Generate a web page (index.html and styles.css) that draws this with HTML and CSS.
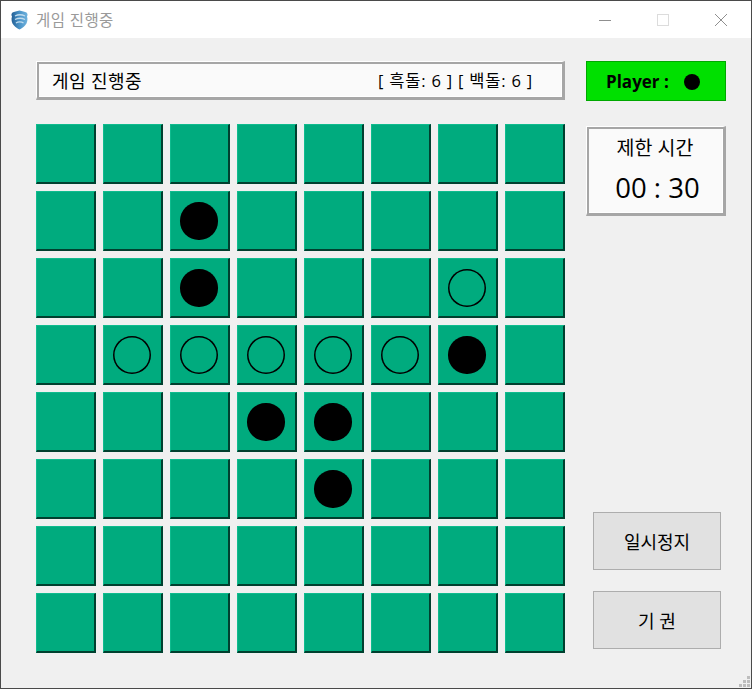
FILE: index.html
```html
<!DOCTYPE html>
<html lang="ko">
<head>
<meta charset="utf-8">
<title>게임 진행중</title>
<link rel="stylesheet" href="styles.css">
</head>
<body>
<div class="window">
  <header class="titlebar">
    <svg class="app-icon" width="17" height="20" viewBox="0 0 17 20">
      <defs>
        <linearGradient id="shield" x1="0" y1="0" x2="1" y2="0">
          <stop offset="0" stop-color="#235f95"/>
          <stop offset=".5" stop-color="#4b94c8"/>
          <stop offset="1" stop-color="#6fb2dd"/>
        </linearGradient>
      </defs>
      <path d="M8.500 0.500 C11 1.500 14 1.500 15.500 2.500 C16.800 4 16.800 5 16 6.500 C17 9 16.500 13 14 15.500 C12.500 17.200 10.500 18.700 8.500 19.500 C6.500 18.700 4.500 17.200 3 15.500 C.5 13 0 9 1 6.500 C.2 5 .2 4 1.500 2.500 C3 1.500 6 1.500 8.500 .5Z" fill="url(#shield)"/>
      <path d="M4 6 C7 4.500 11 4.500 14 6 M4 9.500 C7 8 11 8 14 9.500 M5 13 C7 11.500 10.500 11.500 12.500 13" stroke="#c2dcee" stroke-width="1.300" fill="none"/>
    </svg>
    <span class="title-text">게임 진행중</span>
    <div class="win-controls">
      <svg width="14" height="14" viewBox="0 0 14 14"><path d="M1 7.500H13" stroke="#8f8f8f"/></svg>
      <svg width="14" height="14" viewBox="0 0 14 14"><rect x="1.500" y="1.500" width="11" height="11" fill="none" stroke="#dcdcdc"/></svg>
      <svg width="14" height="14" viewBox="0 0 14 14"><path d="M1 1L13 13M13 1L1 13" stroke="#8f8f8f"/></svg>
    </div>
  </header>
  <main class="content">
    <section class="left">
      <div class="status panel">
        <span>게임 진행중</span>
        <span class="score">[ 흑돌: 6 ] [ 백돌: 6 ]</span>
      </div>
      <div class="board">
        <div class="cell"></div><div class="cell"></div><div class="cell"></div><div class="cell"></div><div class="cell"></div><div class="cell"></div><div class="cell"></div><div class="cell"></div>
        <div class="cell"></div><div class="cell"></div><div class="cell"><i class="disc black"></i></div><div class="cell"></div><div class="cell"></div><div class="cell"></div><div class="cell"></div><div class="cell"></div>
        <div class="cell"></div><div class="cell"></div><div class="cell"><i class="disc black"></i></div><div class="cell"></div><div class="cell"></div><div class="cell"></div><div class="cell"><i class="disc white"></i></div><div class="cell"></div>
        <div class="cell"></div><div class="cell"><i class="disc white"></i></div><div class="cell"><i class="disc white"></i></div><div class="cell"><i class="disc white"></i></div><div class="cell"><i class="disc white"></i></div><div class="cell"><i class="disc white"></i></div><div class="cell"><i class="disc black"></i></div><div class="cell"></div>
        <div class="cell"></div><div class="cell"></div><div class="cell"></div><div class="cell"><i class="disc black"></i></div><div class="cell"><i class="disc black"></i></div><div class="cell"></div><div class="cell"></div><div class="cell"></div>
        <div class="cell"></div><div class="cell"></div><div class="cell"></div><div class="cell"></div><div class="cell"><i class="disc black"></i></div><div class="cell"></div><div class="cell"></div><div class="cell"></div>
        <div class="cell"></div><div class="cell"></div><div class="cell"></div><div class="cell"></div><div class="cell"></div><div class="cell"></div><div class="cell"></div><div class="cell"></div>
        <div class="cell"></div><div class="cell"></div><div class="cell"></div><div class="cell"></div><div class="cell"></div><div class="cell"></div><div class="cell"></div><div class="cell"></div>
      </div>
    </section>
    <aside class="right">
      <div class="player">
        <span>Player :</span>
        <i class="player-disc"></i>
      </div>
      <div class="timer panel">
        <span class="timer-label">제한 시간</span>
        <span class="timer-value">00 : 30</span>
      </div>
      <div class="actions">
        <button class="btn">일시정지</button>
        <button class="btn">기 권</button>
      </div>
    </aside>
  </main>
  <svg class="grip" width="12" height="12" viewBox="0 0 12 12">
    <path d="M8 0h3v3H8zM4 4h3v3H4zM8 4h3v3H8zM0 8h3v3H0zM4 8h3v3H4zM8 8h3v3H8z" fill="#bdbdbd"/>
  </svg>
</div>
</body>
</html>
```
FILE: styles.css
```css
* { box-sizing: border-box; }
html, body { margin: 0; padding: 0; }
body {
  width: 752px;
  height: 689px;
  overflow: hidden;
  font-family: "Open Sans", "Noto Sans CJK KR", sans-serif;
  color: #000;
}
.window {
  position: relative;
  width: 752px;
  height: 689px;
  display: flex;
  flex-direction: column;
  background: #f0f0f0;
  border: 1px solid #4a4a4a;
}
.titlebar {
  height: 37px;
  flex: none;
  display: flex;
  align-items: center;
  background: #fff;
  padding-left: 10px;
}
.app-icon { flex: none; margin-right: 8px; margin-top: 1px; }
.title-text { font-size: 15.500px; color: #9a9a9a; letter-spacing: .4px; }
.win-controls {
  margin-left: auto;
  display: flex;
  gap: 44px;
  padding-right: 23px;
}
.content {
  flex: 1;
  display: flex;
  padding: 23px 0 0 35px;
  gap: 21px;
}
.left { width: 529px; flex: none; }
.panel {
  background: #fafafa;
  border-style: solid;
  border-color: #fff #a6a6a6 #a6a6a6 #fff;
  border-width: 1px 3px 3px 1px;
  box-shadow: inset 2px 2px 0 #a6a6a6, inset -1px -1px 0 #fff;
}
.status {
  height: 39px;
  display: flex;
  justify-content: space-between;
  align-items: center;
  padding: 0 29px 0 15px;
  font-size: 18px;
  letter-spacing: .4px;
}
.score { font-size: 16.500px; letter-spacing: .8px; }
.board {
  margin-top: 24px;
  display: grid;
  grid-template-columns: repeat(8, 60px);
  grid-auto-rows: 60px;
  gap: 7px;
}
.cell {
  display: flex;
  align-items: center;
  justify-content: center;
  background: #00ab7e;
  border-top: 1px solid #0fbb8e;
  border-left: 1px solid #0fbb8e;
  border-right: 2px solid #00402f;
  border-bottom: 2px solid #00402f;
}
.disc {
  width: 38px;
  height: 38px;
  border-radius: 50%;
  display: block;
  margin: 1px 2px 0 0;
}
.disc.black { background: #000; border-radius: 49%; }
.disc.white { box-shadow: inset 0 0 0 1.500px #000; }
.right { width: 140px; flex: none; display: flex; flex-direction: column; }
.player {
  height: 40px;
  display: flex;
  align-items: center;
  gap: 15px;
  padding-left: 19px;
  background: #00e000;
  border: 1px solid #00a800;
  font-size: 17px;
  font-weight: 700;
}
.player-disc {
  width: 16px;
  height: 16px;
  border-radius: 50%;
  background: #000;
  margin-top: 1px;
}
.timer {
  margin-top: 25px;
  height: 90px;
  display: flex;
  flex-direction: column;
  align-items: center;
}
.timer-label { font-size: 19.500px; line-height: 26px; margin-top: 8px; }
.timer-value { font-size: 27.500px; line-height: 34px; margin: 10px 0 0 5px; }
.actions {
  margin-top: auto;
  margin-bottom: 39px;
  padding-left: 7px;
  display: flex;
  flex-direction: column;
  gap: 21px;
}
.btn {
  width: 128px;
  height: 58px;
  font: 400 18px "Open Sans", "Noto Sans CJK KR", sans-serif;
  color: #000;
  background: #e1e1e1;
  border: 1px solid #adadad;
  border-radius: 0;
  padding: 0;
}
.grip { position: absolute; right: 0; bottom: 0; }
```
